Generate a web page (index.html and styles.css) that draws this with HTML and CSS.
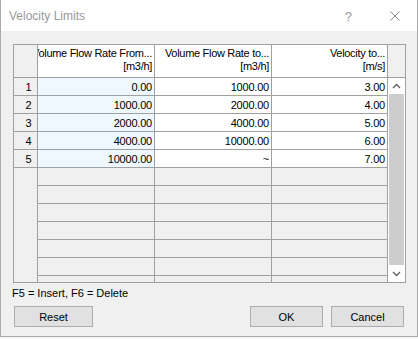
FILE: index.html
```html
<!DOCTYPE html>
<html lang="en">
<head>
    <meta charset="UTF-8">
    <title>Velocity Limits</title>
    <link rel="stylesheet" href="styles.css">
</head>
<body>
    <div class="window">
        <div class="titlebar">
            <span class="title">Velocity Limits</span>
            <span class="help">?</span>
            <span class="close">
                <svg width="10" height="10" viewBox="0 0 10 10"><path d="M0.5 0.5 L9.5 9.5 M9.5 0.5 L0.5 9.5" stroke="#8a8a8a" stroke-width="1" fill="none"/></svg>
            </span>
        </div>

        <div class="dialog-body">
            <div class="grid">
                <div class="corner"></div>
                <div class="colhead"><span>Volume Flow Rate From...</span><span>[m3/h]</span></div>
                <div class="colhead"><span>Volume Flow Rate to...</span><span>[m3/h]</span></div>
                <div class="colhead"><span>Velocity to...</span><span>[m/s]</span></div>
                <div class="scrollhead"></div>

                <div class="scrollbar">
                    <div class="arrow">
                        <svg width="9" height="6" viewBox="0 0 9 6"><path d="M1 5 L4.5 1.5 L8 5" stroke="#606060" stroke-width="1.4" fill="none"/></svg>
                    </div>
                    <div class="thumb"></div>
                    <div class="arrow">
                        <svg width="9" height="6" viewBox="0 0 9 6"><path d="M1 1 L4.5 4.5 L8 1" stroke="#606060" stroke-width="1.4" fill="none"/></svg>
                    </div>
                </div>

                <div class="rowhead">1</div>
                <div class="cell from">0.00</div>
                <div class="cell">1000.00</div>
                <div class="cell">3.00</div>

                <div class="rowhead">2</div>
                <div class="cell from">1000.00</div>
                <div class="cell">2000.00</div>
                <div class="cell">4.00</div>

                <div class="rowhead">3</div>
                <div class="cell from">2000.00</div>
                <div class="cell">4000.00</div>
                <div class="cell">5.00</div>

                <div class="rowhead">4</div>
                <div class="cell from">4000.00</div>
                <div class="cell">10000.00</div>
                <div class="cell">6.00</div>

                <div class="rowhead">5</div>
                <div class="cell from">10000.00</div>
                <div class="cell">~</div>
                <div class="cell">7.00</div>

                <div class="rowhead-empty"></div>
                <div class="filler"></div>
                <div class="filler"></div>
                <div class="filler"></div>
            </div>

            <div class="hint">F5 = Insert, F6 = Delete</div>

            <div class="buttons">
                <button class="btn btn-reset">Reset</button>
                <button class="btn btn-ok">OK</button>
                <button class="btn btn-cancel">Cancel</button>
            </div>
        </div>
    </div>
</body>
</html>
```

FILE: styles.css
```css
body {
    margin: 0;
    background: #f7f7f7;
    font-family: "Liberation Sans", Arial, sans-serif;
    color: #000;
}

.window {
    width: 418px;
    height: 337px;
    box-sizing: border-box;
    border: 1px solid #aaaaaa;
    border-top: none;
    background: #f0f0f0;
    display: flex;
    flex-direction: column;
}

.titlebar {
    height: 31px;
    flex-shrink: 0;
    background: #fff;
    display: flex;
    align-items: center;
    padding-left: 8px;
    font-size: 12px;
    color: #999;
}

.title {
    flex-grow: 1;
    padding-top: 1px;
}

.help {
    font-size: 13px;
    color: #999;
    margin-right: 38px;
    padding-top: 1px;
}

.close {
    display: flex;
    margin-right: 17px;
}

.dialog-body {
    flex-grow: 1;
    padding: 13px 11px 0 12px;
}

.grid {
    width: 393px;
    height: 239px;
    box-sizing: border-box;
    border: 1px solid #a0a0a0;
    background: #a0a0a0;
    display: grid;
    grid-template-columns: 23px 116px 116px 115px 17px;
    grid-template-rows: 32px repeat(5, 17px) 1fr;
    gap: 1px;
    font-size: 11px;
    letter-spacing: -0.2px;
}

.corner,
.scrollhead {
    background: #f0f0f0;
}

.colhead {
    background: #fff;
    display: flex;
    flex-direction: column;
    align-items: flex-end;
    padding: 2px 2px 0 0;
    line-height: 13px;
    letter-spacing: -0.3px;
    white-space: nowrap;
    overflow: hidden;
}

.rowhead {
    background: #f0f0f0;
    text-align: center;
    padding: 1px 0 0 6px;
    line-height: 16px;
}

.cell {
    background: #fff;
    text-align: right;
    padding: 1px 2px 0 0;
    line-height: 16px;
    white-space: nowrap;
    overflow: hidden;
}

.cell.from {
    background: #f0f8ff;
}

.rowhead-empty {
    background: #f0f0f0;
}

.filler {
    background: repeating-linear-gradient(to bottom, #f0f0f0 0, #f0f0f0 17px, #a0a0a0 17px, #a0a0a0 18px);
}

.scrollbar {
    grid-column: 5;
    grid-row: 2 / -1;
    background: #fff;
    display: flex;
    flex-direction: column;
}

.arrow {
    height: 16px;
    flex-shrink: 0;
    display: flex;
    align-items: center;
    justify-content: center;
}

.arrow:last-child {
    height: 17px;
}

.thumb {
    flex-grow: 1;
    margin: 0 1px;
    background: #cdcdcd;
}

.hint {
    font-size: 11px;
    line-height: 13px;
    margin: 4px 0 0 -1px;
}

.buttons {
    display: flex;
    gap: 8px;
    margin-top: 6px;
    padding: 0 2px 0 1px;
}

.btn {
    height: 21px;
    box-sizing: border-box;
    border: 1px solid #adadad;
    background: #e1e1e1;
    font-family: "Liberation Sans", Arial, sans-serif;
    font-size: 11px;
    color: #000;
    padding: 0;
}

.btn-reset {
    width: 79px;
    margin-right: auto;
}

.btn-ok,
.btn-cancel {
    width: 73px;
}
```
